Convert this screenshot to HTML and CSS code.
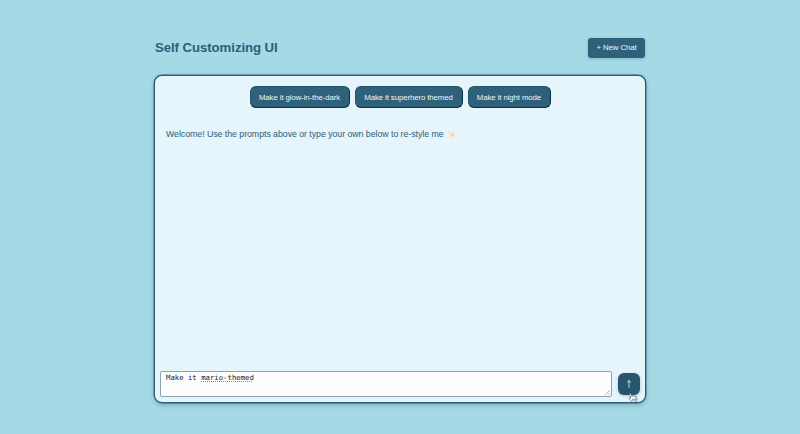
FILE: index.html
```
<!DOCTYPE html>
<html lang="en">
<head>
<meta charset="utf-8">
<title>Self Customizing UI</title>
<link rel="stylesheet" href="styles.css">
</head>
<body>
<main class="app">
  <header class="header">
    <h1 class="title">Self Customizing UI</h1>
    <button class="new-chat">+ New Chat</button>
  </header>
  <section class="card">
    <div class="prompts">
      <button class="prompt glow">Make it glow-in-the-dark</button>
      <button class="prompt hero">Make it superhero themed</button>
      <button class="prompt night">Make it night mode</button>
    </div>
    <div class="messages">
      <p class="message"><span class="welcome">Welcome! Use the prompts above or type your own below to re-style me</span>
        <svg class="sparkles" viewBox="0 0 10 10"><path fill="#f8d997" d="M6 1 7 4.2 9.5 5.3 7 6.3 6 9.5 5 6.3 2.8 5.3 5 4.2Z"/><path fill="#f7e4c0" d="M2.3.5 2.9 2 4.3 2.6 2.9 3.2 2.3 4.6 1.7 3.2.4 2.6 1.7 2ZM2.5 6.6 3 7.8 4 8.2 3 8.6 2.5 9.8 2 8.6 1 8.2 2 7.8Z"/></svg>
      </p>
    </div>
    <div class="composer">
      <div class="input"><span>Make it <span class="misspelt">mario-themed</span></span>
        <svg class="grip" viewBox="0 0 6 6"><path d="M0 6 6 0M3.3 6 6 3.3"/></svg>
      </div>
      <button class="send" aria-label="Send"><svg viewBox="0 0 8 10"><path d="M4 8.8V1.5M2.3 3.5 4 1.5l1.7 2"/></svg></button>
    </div>
  </section>
</main>
<svg class="cursor" viewBox="0 0 12 14"><path d="M3.2 6.8 1.8 2.5C1.5 1.3 3 .8 3.5 2L4.7 5c.3-.9 1.6-.9 1.9 0 .5-.8 1.5-.5 1.8.3.7-.6 1.5-.1 1.7.7l.5 2.1c.2 1.5-.4 2.5-.8 3.5l-4.4.8C4.7 10.8 3.5 10 2 8.5 1 7.4 2 6.2 3.2 6.8Z"/><path d="M5.5 8.2 6 10.5M7 7.8l.5 2.4M8.5 7.5l.4 2.3"/></svg>
</body>
</html>
```

FILE: styles.css
```
* { box-sizing: border-box; }
body {
  margin: 0;
  height: 434px;
  overflow: hidden;
  background: #a5d9e5;
  color: #2c5f78;
  font-family: "Liberation Sans", Arial, sans-serif;
}
button { font-family: inherit; color: #eef8fd; white-space: nowrap; padding: 0; }
.app { width: 492px; margin: 0 0 0 154px; padding-top: 37px; }
.header {
  display: flex;
  align-items: center;
  justify-content: space-between;
  height: 21px;
  padding: 0 1px;
  margin-bottom: 17px;
}
.title { margin: 0; font-size: 13.2px; letter-spacing: -.06px; line-height: 20px; white-space: nowrap; }
.new-chat {
  width: 57px;
  height: 20px;
  border: 0;
  border-radius: 3px;
  background: #2f617b;
  font-size: 7.8px;
  letter-spacing: -.1px;
  box-shadow: 0 1px 3px #2c5f7850;
}
.card {
  display: flex;
  flex-direction: column;
  height: 328px;
  border: 1px solid #2c5f78;
  border-radius: 8px;
  background: #e6f4fb;
  box-shadow: 0 0 0 .4px #2c5f78, 0 2px 5px #2c5f7860;
  padding: 10px 5px 5px;
}
.prompts { display: flex; justify-content: center; gap: 5px; }
.prompt {
  height: 22px;
  border: 1px solid;
  border-color: #24536b #0b2e43 #0b2e43 #24536b;
  border-radius: 6px;
  background: #2f617b;
  font-size: 7.8px;
  letter-spacing: -.09px;
}
.glow { width: 100px; }
.hero { width: 108px; }
.night { width: 83px; }
.messages { flex: 1; padding: 19px 6px 0; }
.message { display: flex; align-items: center; gap: 3px; margin: 0; font-size: 8.8px; letter-spacing: -.05px; line-height: 14px; white-space: nowrap; }
.sparkles { width: 9px; height: 9px; }
.composer { display: flex; align-items: center; gap: 6px; }
.input {
  flex: 1;
  display: flex;
  justify-content: space-between;
  height: 26px;
  padding: 1px 1px 1px 5px;
  border: 1px solid #8ba3b0;
  border-radius: 2px;
  background: #fefeff;
  color: #15191c;
  font: 7.3px/10px "DejaVu Sans Mono", monospace;
}
.misspelt { text-decoration: underline dotted #ee6070 1px; text-underline-offset: 1px; }
.grip { align-self: flex-end; width: 5px; height: 5px; fill: none; stroke: #77818a; stroke-width: .7; }
.send {
  display: grid;
  place-items: center;
  width: 22px;
  height: 22px;
  border: 0;
  border-radius: 6px;
  background: #28556e;
  box-shadow: 0 1px 3px #2c5f7850;
}
.send svg { width: 8px; height: 10px; fill: none; stroke: #e6f4fb; stroke-width: .8; }
.cursor {
  position: absolute;
  left: 628px;
  top: 392px;
  width: 10px;
  height: 12px;
  fill: #fff;
  stroke: #27343c;
  stroke-width: .7;
}
```
